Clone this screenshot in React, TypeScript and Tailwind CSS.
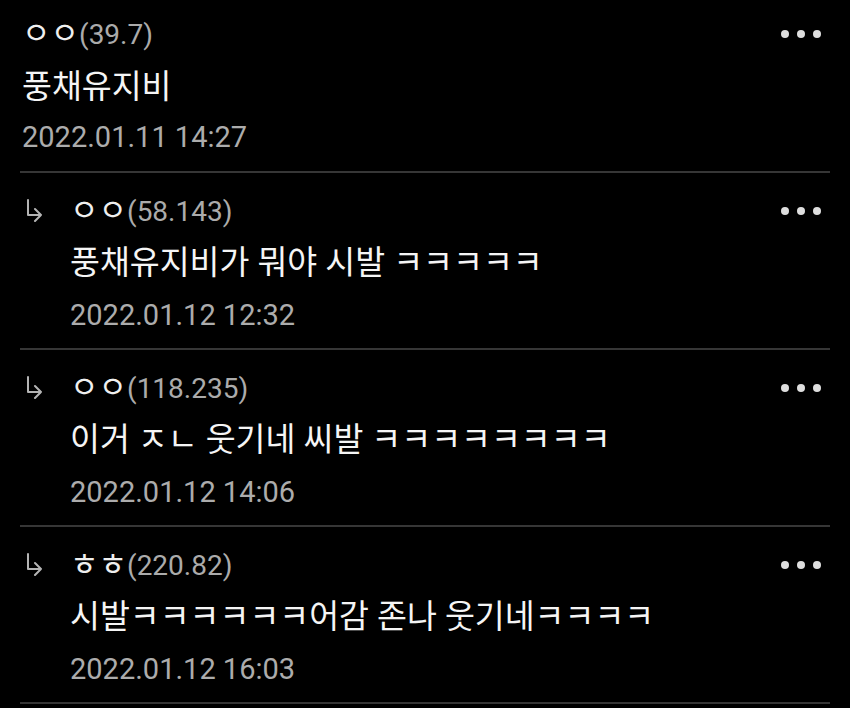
import React from "react";

type Comment = {
  name: string;
  score: string;
  body: string;
  date: string;
  reply?: boolean;
};

const COMMENTS: Comment[] = [
  { name: "ㅇㅇ", score: "(39.7)", body: "풍채유지비", date: "2022.01.11 14:27" },
  { name: "ㅇㅇ", score: "(58.143)", body: "풍채유지비가 뭐야 시발 ㅋㅋㅋㅋㅋ", date: "2022.01.12 12:32", reply: true },
  { name: "ㅇㅇ", score: "(118.235)", body: "이거 ㅈㄴ 웃기네 씨발 ㅋㅋㅋㅋㅋㅋㅋㅋ", date: "2022.01.12 14:06", reply: true },
  { name: "ㅎㅎ", score: "(220.82)", body: "시발ㅋㅋㅋㅋㅋㅋ어감 존나 웃기네ㅋㅋㅋㅋ", date: "2022.01.12 16:03", reply: true },
];

function ReplyArrow() {
  return (
    <svg width="22" height="28" viewBox="0 0 22 28" fill="none" className="shrink-0">
      <path
        d="M5 6 V21 H18 M12 15 L18 21 L12 27"
        stroke="#b4b4b4"
        strokeWidth="2"
        strokeLinecap="round"
        strokeLinejoin="round"
      />
    </svg>
  );
}

function MoreDots() {
  return (
    <div className="flex items-center gap-[8px]">
      <span className="size-[8px] rounded-full bg-[#dedede]" />
      <span className="size-[8px] rounded-full bg-[#dedede]" />
      <span className="size-[8px] rounded-full bg-[#dedede]" />
    </div>
  );
}

function CommentRow({ c, first }: { c: Comment; first: boolean }) {
  return (
    <div
      className={`flex border-b-2 border-[#363636] ${first ? "pt-[14px] pb-[17px]" : "pt-[18px] pb-[13px]"}`}
    >
      {c.reply ? (
        <div className="flex h-[40px] w-[50px] items-start pl-[3px] pt-[3px]">
          <ReplyArrow />
        </div>
      ) : (
        <div className="w-[2px]" />
      )}
      <div className="min-w-0 flex-1">
        <div className="flex h-[40px] items-center justify-between">
          <div className="text-[28px] leading-[40px]">
            <span className="text-[31px] text-[#efefef]">{c.name}</span>
            <span className="text-[#ababab]">{c.score}</span>
          </div>
          <div className="mr-[9px]">
            <MoreDots />
          </div>
        </div>
        <div
          className={`text-[32.5px] text-[#f5f5f5] whitespace-nowrap ${first ? "leading-[66px]" : "leading-[64px]"}`}
        >
          {c.body}
        </div>
        <div
          className={`text-[29px] text-[#acacac] ${first ? "leading-[34px]" : "leading-[40px]"}`}
        >
          {c.date}
        </div>
      </div>
    </div>
  );
}

export default function App() {
  return (
    <div
      className="h-[708px] w-[850px] overflow-hidden bg-black px-[20px]"
      style={{ fontFamily: "Roboto, 'Noto Sans CJK KR', sans-serif" }}
    >
      {COMMENTS.map((c, i) => (
        <CommentRow key={i} c={c} first={i === 0} />
      ))}
    </div>
  );
}
